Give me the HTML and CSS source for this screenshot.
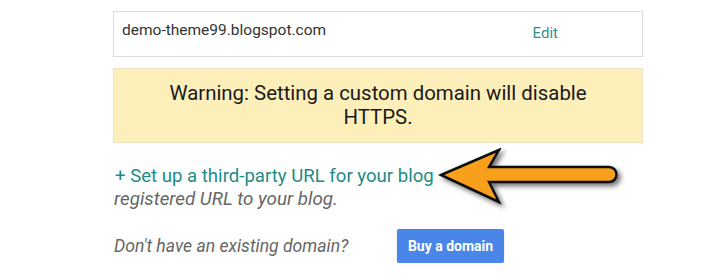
FILE: index.html
```html
<!DOCTYPE html>
<html lang="en">
<head>
  <meta charset="UTF-8">
  <title>Publishing</title>
  <link rel="stylesheet" href="styles.css">
</head>
<body>
  <div class="panel">
    <div class="url-box">
      <span class="url">demo-theme99.blogspot.com</span>
      <a class="edit" href="#">Edit</a>
    </div>

    <div class="warning">
      Warning: Setting a custom domain will disable<br>HTTPS.
    </div>

    <div class="third-party">
      <a class="setup" href="#">+ Set up a third-party URL for your blog</a>
      <div class="hint">registered URL to your blog.</div>
    </div>

    <div class="buy-row">
      <span class="question">Don't have an existing domain?</span>
      <button type="button" class="buy">Buy a domain</button>
    </div>

    <!-- annotation arrow drawn over the page -->
    <svg class="arrow" width="200" height="70" viewBox="0 0 200 70">
      <defs>
        <filter id="shadow" x="-10%" y="-20%" width="130%" height="150%">
          <feDropShadow dx="3" dy="3" stdDeviation="2.5" flood-color="#000" flood-opacity="0.55"/>
        </filter>
      </defs>
      <path d="M4 27 L62 2 L52 19 L172 19 A7.5 7.5 0 0 1 172 34 L52 34 L62 54 Z"
            fill="#f8a01c" stroke="#111" stroke-width="2.5" stroke-linejoin="miter" filter="url(#shadow)"/>
    </svg>
  </div>
</body>
</html>
```

FILE: styles.css
```css
body {
  margin: 0;
  background: #fff;
  font-family: Roboto, "Noto Sans", sans-serif;
  color: #222;
}
.panel {
  position: relative;
  width: 530px;
  margin-left: 113px;
  padding-top: 11px;
}
.url-box {
  display: flex;
  justify-content: space-between;
  border: 1px solid #dcdcdc;
  padding: 9px 84px 0 8px;
  box-sizing: border-box;
  height: 46px;
}
.url {
  font-size: 15.5px;
  color: #333;
}
.edit {
  font-size: 15px;
  color: #33908e;
  text-decoration: none;
  margin-top: 3px;
}
.warning {
  margin-top: 11px;
  height: 75px;
  box-sizing: border-box;
  background: #fdefba;
  border: 1px solid #ece3c4;
  text-align: center;
  font-size: 20.4px;
  line-height: 24px;
  padding-top: 12px;
  color: #1a1a1a;
}
.third-party {
  margin-top: 22px;
  font-size: 18.6px;
  line-height: 23px;
}
.setup {
  color: #1d8c86;
  text-decoration: none;
  margin-left: 2px;
}
.hint {
  font-style: italic;
  font-size: 18.8px;
  color: #666;
  margin-left: 1px;
}
.buy-row {
  display: flex;
  align-items: center;
  margin-top: 18px;
}
.question {
  font-style: italic;
  font-size: 17.6px;
  color: #666;
  margin-left: 1px;
  width: 283px;
}
.buy {
  width: 107px;
  height: 34px;
  border: none;
  border-radius: 2px;
  background: #4a86e8;
  color: #fff;
  font-family: Roboto, sans-serif;
  font-weight: bold;
  font-size: 14px;
  box-shadow: 0 1px 2px rgba(0, 0, 0, 0.2);
}
.arrow {
  position: absolute;
  left: 324px;
  top: 148px;
}
```
